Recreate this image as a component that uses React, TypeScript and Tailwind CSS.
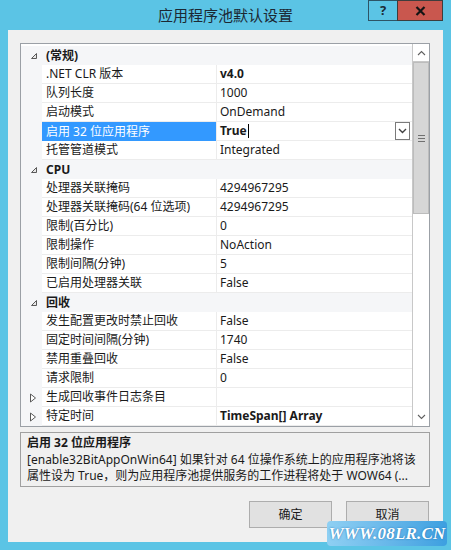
import React from "react";

type Row =
  | { kind: "cat"; label: string }
  | {
      kind: "prop";
      label: string;
      value: string;
      bold?: boolean;
      selected?: boolean;
      collapsed?: boolean;
    };

const rows: Row[] = [
  { kind: "cat", label: "(常规)" },
  { kind: "prop", label: ".NET CLR 版本", value: "v4.0", bold: true },
  { kind: "prop", label: "队列长度", value: "1000" },
  { kind: "prop", label: "启动模式", value: "OnDemand" },
  { kind: "prop", label: "启用 32 位应用程序", value: "True", bold: true, selected: true },
  { kind: "prop", label: "托管管道模式", value: "Integrated" },
  { kind: "cat", label: "CPU" },
  { kind: "prop", label: "处理器关联掩码", value: "4294967295" },
  { kind: "prop", label: "处理器关联掩码(64 位选项)", value: "4294967295" },
  { kind: "prop", label: "限制(百分比)", value: "0" },
  { kind: "prop", label: "限制操作", value: "NoAction" },
  { kind: "prop", label: "限制间隔(分钟)", value: "5" },
  { kind: "prop", label: "已启用处理器关联", value: "False" },
  { kind: "cat", label: "回收" },
  { kind: "prop", label: "发生配置更改时禁止回收", value: "False" },
  { kind: "prop", label: "固定时间间隔(分钟)", value: "1740" },
  { kind: "prop", label: "禁用重叠回收", value: "False" },
  { kind: "prop", label: "请求限制", value: "0" },
  { kind: "prop", label: "生成回收事件日志条目", value: "", collapsed: true },
  { kind: "prop", label: "特定时间", value: "TimeSpan[] Array", bold: true, collapsed: true },
];

const ExpandedGlyph = () => (
  <svg width="8" height="8" viewBox="0 0 8 8">
    <polygon points="6.5,1.5 6.5,6.5 1.5,6.5" fill="#e8e8e8" stroke="#595959" strokeWidth="1" />
  </svg>
);

const CollapsedGlyph = () => (
  <svg width="8" height="10" viewBox="0 0 8 10">
    <polygon points="1.5,1 6.5,5 1.5,9" fill="#ffffff" stroke="#595959" strokeWidth="1" />
  </svg>
);

export default function App() {
  const font = { fontFamily: '"Noto Sans", "Noto Sans CJK SC", sans-serif' };
  return (
    <div
      className="relative w-[451px] h-[550px] bg-[#5bc4e5] flex flex-col overflow-hidden text-[12px] text-[#1a1a1a]"
      style={font}
    >
      {/* Title bar */}
      <div className="h-[30px] grid grid-cols-[1fr_auto_1fr] items-start">
        <div />
        <div className="pt-[4px] text-[15px] leading-[22px] text-[#1b2833]">应用程序池默认设置</div>
        <div className="flex justify-end pr-[8px]">
          <div className="w-[29px] h-[21px] border border-[#2d5466] border-r-0 flex items-center justify-center font-bold text-[13px] text-[#1b2b36]">
            ?
          </div>
          <div className="w-[46px] h-[21px] border border-[#3d3d3d] bg-[#c9574e] flex items-center justify-center">
            <svg width="11" height="10" viewBox="0 0 11 10">
              <path d="M1.5 1 L9.5 9 M9.5 1 L1.5 9" stroke="#141414" strokeWidth="2.2" />
            </svg>
          </div>
        </div>
      </div>

      {/* Client area */}
      <div className="mx-[8px] h-[512px] bg-[#f0f0f0] flex flex-col pl-[12px] pr-[13px] pt-[13px]">
        {/* Property grid */}
        <div className="w-[410px] h-[384px] border border-[#9ba0a6] bg-white flex">
          <div className="w-[391px] pt-[2px] flex flex-col bg-white">
            {rows.map((r, i) =>
              r.kind === "cat" ? (
                <div key={i} className="h-[19px] flex items-center bg-[#f5f6f8]">
                  <div className="w-[21px] flex justify-end pr-[4px]">
                    <ExpandedGlyph />
                  </div>
                  <div className="pl-[4px] font-bold leading-[19px]">{r.label}</div>
                </div>
              ) : (
                <div key={i} className="h-[19px] flex">
                  <div className="w-[21px] bg-[#f5f6f8] flex items-center justify-end pr-[5px]">
                    {r.collapsed ? <CollapsedGlyph /> : null}
                  </div>
                  <div
                    className={
                      r.selected
                        ? "w-[174px] bg-[#3399ff] text-white pl-[4px] leading-[19px] whitespace-nowrap"
                        : "w-[174px] pl-[4px] leading-[18px] whitespace-nowrap border-b border-[#ececec]"
                    }
                  >
                    {r.label}
                  </div>
                  <div className="flex-1 border-l border-[#ececec] border-b flex items-center pl-[3px] relative">
                    <span className={r.bold ? "font-bold leading-[18px]" : "leading-[18px]"}>{r.value}</span>
                    {r.selected ? (
                      <>
                        <span className="w-[1px] h-[14px] bg-black ml-[1px]" />
                        <div className="ml-auto mr-[2px] w-[15px] h-[18px] border border-[#7a7a7a] bg-white flex items-center justify-center">
                          <svg width="9" height="6" viewBox="0 0 9 6">
                            <path d="M1 1 L4.5 4.5 L8 1" stroke="#404040" strokeWidth="1.4" fill="none" />
                          </svg>
                        </div>
                      </>
                    ) : null}
                  </div>
                </div>
              )
            )}
          </div>
          {/* Scrollbar */}
          <div className="w-[17px] border-l border-[#c8c8c8] bg-[#f4f4f4] flex flex-col">
            <div className="h-[18px] bg-white border-b border-[#c8c8c8] flex items-center justify-center">
              <svg width="9" height="6" viewBox="0 0 9 6">
                <path d="M1 5 L4.5 1.5 L8 5" stroke="#606060" strokeWidth="1.1" fill="none" />
              </svg>
            </div>
            <div className="h-[152px] bg-[#d6d6d6] border border-[#bcbcbc] flex items-center justify-center">
              <div className="flex flex-col gap-[2px]">
                <div className="w-[7px] h-[1px] bg-[#707070]" />
                <div className="w-[7px] h-[1px] bg-[#707070]" />
                <div className="w-[7px] h-[1px] bg-[#707070]" />
              </div>
            </div>
            <div className="flex-1 bg-white" />
            <div className="h-[18px] bg-white flex items-center justify-center">
              <svg width="9" height="6" viewBox="0 0 9 6">
                <path d="M1 1 L4.5 4.5 L8 1" stroke="#606060" strokeWidth="1.1" fill="none" />
              </svg>
            </div>
          </div>
        </div>

        {/* Description */}
        <div className="mt-[5px] w-[410px] h-[55px] border border-[#a0a0a0] bg-[#f0f0f0] px-[6px] pt-[2px] flex flex-col leading-[16.5px] whitespace-nowrap">
          <div className="font-bold">启用 32 位应用程序</div>
          <div>[enable32BitAppOnWin64] 如果针对 64 位操作系统上的应用程序池将该</div>
          <div>属性设为 True，则为应用程序池提供服务的工作进程将处于 WOW64 (...</div>
        </div>

        {/* Buttons */}
        <div className="mt-[14px] flex justify-end gap-[14px] pr-[1px]">
          <button className="w-[83px] h-[27px] bg-[#e1e1e1] border border-[#adadad] text-[12px] text-[#1a1a1a]">
            确定
          </button>
          <button className="w-[83px] h-[27px] bg-[#e1e1e1] border border-[#adadad] text-[12px] text-[#1a1a1a]">
            取消
          </button>
        </div>
      </div>

      {/* Watermark */}
      <div className="absolute left-[327px] top-[521px] w-[120px] h-[25px] rounded-[4px] bg-gradient-to-r from-[#8fd0f3] to-[#3c9fe0] flex items-center justify-center">
        <span
          className="text-white font-bold italic text-[17px] tracking-[0.2px]"
          style={{ fontFamily: '"Liberation Serif", serif', textShadow: "0 0 2px #1d6fb0" }}
        >
          WWW.08LR.CN
        </span>
      </div>
    </div>
  );
}
